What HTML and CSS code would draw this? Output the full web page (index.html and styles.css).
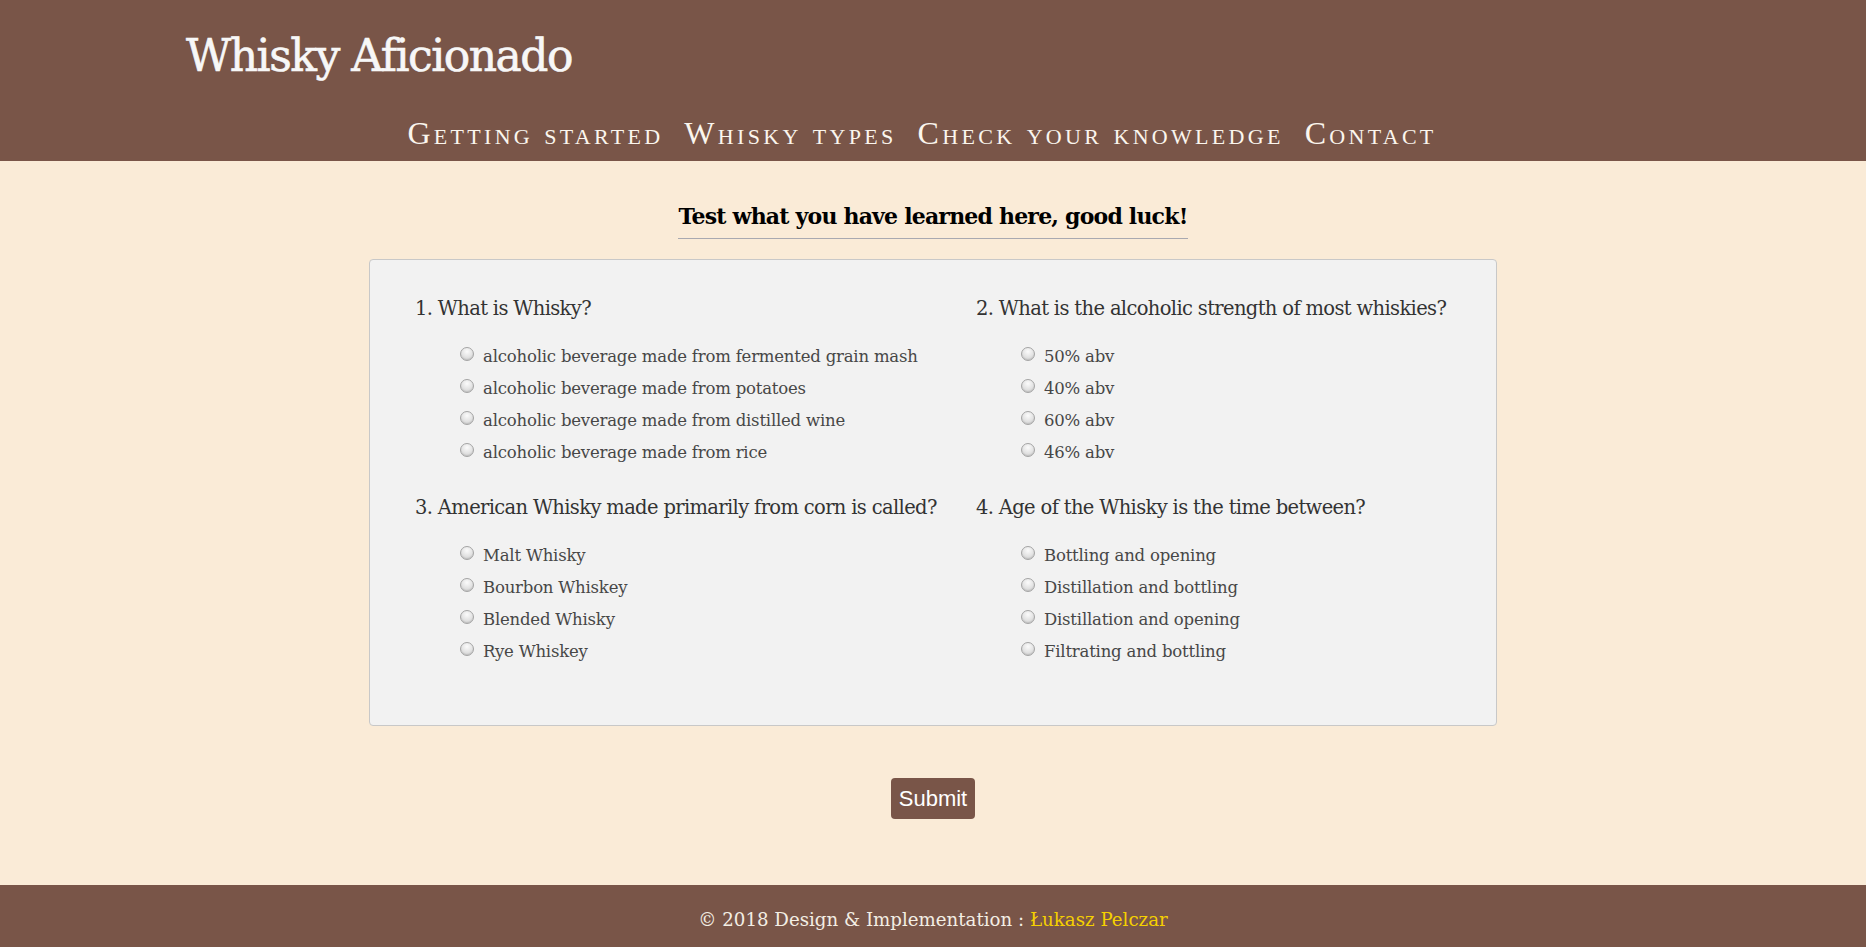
FILE: index.html
```html
<!DOCTYPE html>
<html lang="en">
<head>
<meta charset="utf-8">
<title>Whisky Aficionado - Check your knowledge</title>
<link rel="stylesheet" href="styles.css">
</head>
<body>
<header class="site-header">
  <h1 class="logo">Whisky Aficionado</h1>
  <nav class="nav">
    <a class="nav-link" href="#">Getting started</a>
    <a class="nav-link" href="#">Whisky types</a>
    <a class="nav-link" href="#">Check your knowledge</a>
    <a class="nav-link" href="#">Contact</a>
  </nav>
</header>
<main class="main">
  <h2 class="page-title">Test what you have learned here, good luck!</h2>
  <form class="quiz">
    <div class="quiz-grid">
      <div class="question">
        <p class="q-text">1. What is Whisky?</p>
        <label class="option"><input class="radio" type="radio" name="q1"><span>alcoholic beverage made from fermented grain mash</span></label>
        <label class="option"><input class="radio" type="radio" name="q1"><span>alcoholic beverage made from potatoes</span></label>
        <label class="option"><input class="radio" type="radio" name="q1"><span>alcoholic beverage made from distilled wine</span></label>
        <label class="option"><input class="radio" type="radio" name="q1"><span>alcoholic beverage made from rice</span></label>
      </div>
      <div class="question">
        <p class="q-text">2. What is the alcoholic strength of most whiskies?</p>
        <label class="option"><input class="radio" type="radio" name="q2"><span>50% abv</span></label>
        <label class="option"><input class="radio" type="radio" name="q2"><span>40% abv</span></label>
        <label class="option"><input class="radio" type="radio" name="q2"><span>60% abv</span></label>
        <label class="option"><input class="radio" type="radio" name="q2"><span>46% abv</span></label>
      </div>
      <div class="question">
        <p class="q-text">3. American Whisky made primarily from corn is called?</p>
        <label class="option"><input class="radio" type="radio" name="q3"><span>Malt Whisky</span></label>
        <label class="option"><input class="radio" type="radio" name="q3"><span>Bourbon Whiskey</span></label>
        <label class="option"><input class="radio" type="radio" name="q3"><span>Blended Whisky</span></label>
        <label class="option"><input class="radio" type="radio" name="q3"><span>Rye Whiskey</span></label>
      </div>
      <div class="question">
        <p class="q-text">4. Age of the Whisky is the time between?</p>
        <label class="option"><input class="radio" type="radio" name="q4"><span>Bottling and opening</span></label>
        <label class="option"><input class="radio" type="radio" name="q4"><span>Distillation and bottling</span></label>
        <label class="option"><input class="radio" type="radio" name="q4"><span>Distillation and opening</span></label>
        <label class="option"><input class="radio" type="radio" name="q4"><span>Filtrating and bottling</span></label>
      </div>
    </div>
  </form>
  <button class="submit" type="button">Submit</button>
</main>
<footer class="site-footer">
  <p class="footer-text">&copy; 2018 Design &amp; Implementation : <a class="footer-link" href="#">Łukasz Pelczar</a></p>
</footer>
</body>
</html>
```

FILE: styles.css
```css
* {
  box-sizing: border-box;
}

html, body {
  margin: 0;
  padding: 0;
}

body {
  background: #faebd7;
  font-family: "DejaVu Serif", "Liberation Serif", serif;
  color: #333;
  min-height: 947px;
}

.site-header {
  background: #795548;
  height: 161px;
  padding-top: 34px;
}

.logo {
  margin: 0;
  padding-left: 186px;
  font-family: "DejaVu Serif", serif;
  font-weight: normal;
  font-size: 44px;
  line-height: 44px;
  letter-spacing: -1.5px;
  color: #f7f7f7;
  -webkit-text-stroke: 0.6px #f7f7f7;
}

.nav {
  display: flex;
  justify-content: center;
  gap: 21px;
  margin-top: 39px;
  padding-right: 22px;
}

.nav-link {
  font-family: "Liberation Serif", serif;
  font-variant: small-caps;
  font-size: 32px;
  line-height: 32px;
  letter-spacing: 3.3px;
  color: #fbf6ee;
  text-decoration: none;
}

.main {
  display: flex;
  flex-direction: column;
  align-items: center;
}

.page-title {
  margin: 42px 0 0;
  padding-bottom: 9px;
  border-bottom: 1px solid #a9a9b0;
  font-size: 22px;
  line-height: 26px;
  letter-spacing: -0.8px;
  font-weight: bold;
  color: #000;
}

.quiz {
  margin-top: 20px;
  width: 1128px;
  background: #f2f2f2;
  border: 1px solid #c8c8c8;
  border-radius: 4px;
  padding: 37px 0 57px 45px;
}

.quiz-grid {
  display: grid;
  grid-template-columns: 561px 1fr;
  row-gap: 27px;
}

.question {
  display: flex;
  flex-direction: column;
}

.q-text {
  margin: 0 0 20px;
  font-size: 19.5px;
  line-height: 24px;
  letter-spacing: -0.65px;
  color: #333;
}

.option {
  display: flex;
  align-items: flex-start;
  gap: 9px;
  height: 32px;
  padding-left: 45px;
  font-size: 16.5px;
  line-height: 31px;
  letter-spacing: -0.2px;
  color: #474747;
}

.radio {
  appearance: none;
  -webkit-appearance: none;
  margin: 6px 0 0;
  width: 14px;
  height: 14px;
  border-radius: 50%;
  border: 1px solid #a4a4a4;
  background: radial-gradient(circle at 50% 30%, #fbfbfb 0%, #e2e2e2 55%, #c6c6c6 100%);
  box-shadow: inset 0 -1px 1px rgba(0, 0, 0, 0.08);
  flex: none;
}

.submit {
  margin-top: 52px;
  height: 41px;
  padding: 0 8px;
  border: none;
  border-radius: 4px;
  background: #795548;
  color: #fff;
  font-family: "Liberation Sans", Arial, sans-serif;
  font-size: 22px;
  line-height: 41px;
  cursor: pointer;
}

.site-footer {
  margin-top: 66px;
  background: #795548;
  height: 62px;
  padding-top: 23px;
}

.footer-text {
  margin: 0;
  text-align: center;
  font-size: 18.2px;
  line-height: 24px;
  color: #f3eee4;
}

.footer-link {
  color: #f5d000;
  text-decoration: none;
}
```
